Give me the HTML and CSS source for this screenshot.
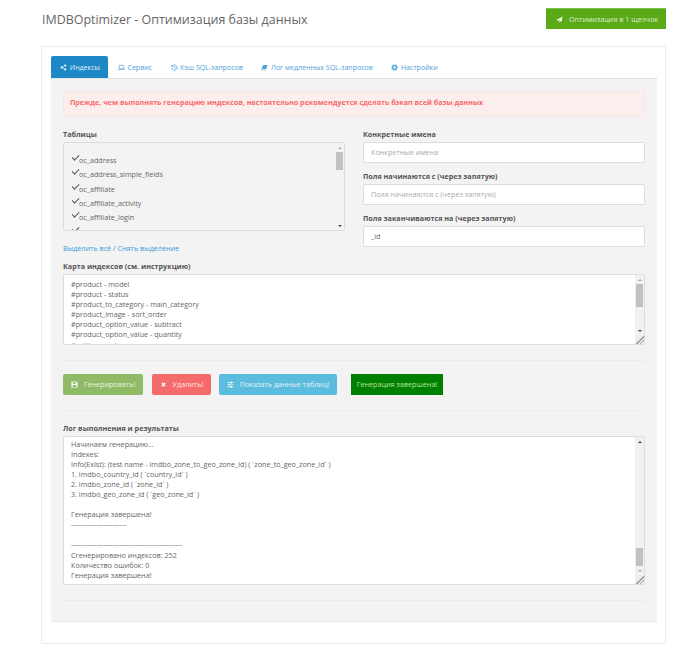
FILE: index.html
```html
<!DOCTYPE html>
<html lang="ru">
<head>
<meta charset="utf-8">
<title>IMDBOptimizer</title>
<link rel="stylesheet" href="styles.css">
</head>
<body>
<div class="page">
  <header class="head">
    <h1>IMDBOptimizer - Оптимизация базы данных</h1>
    <a class="oneclick"><svg class="ic" viewBox="0 0 16 16"><path d="M15 1 1 9l4 1.6L13 4l-6 7.4V15l2.4-3 3 1.2z" fill="currentColor"/></svg><span>Оптимизация в 1 щелчок</span></a>
  </header>
  <main class="panel">
    <nav class="tabs">
      <a class="tab active"><svg class="ic" viewBox="0 0 16 16"><path d="M12 3 4 8l8 5" fill="none" stroke="currentColor" stroke-width="1.6"/><circle cx="12" cy="3.5" r="2.6" fill="currentColor"/><circle cx="4" cy="8" r="2.6" fill="currentColor"/><circle cx="12" cy="12.5" r="2.6" fill="currentColor"/></svg>Индексы</a>
      <a class="tab"><svg class="ic" viewBox="0 0 16 16"><rect x="3" y="3" width="10" height="8" rx="1" fill="none" stroke="currentColor" stroke-width="1.6"/><path d="M0 12h16v1.500H0z" fill="currentColor"/></svg>Сервис</a>
      <a class="tab"><svg class="ic" viewBox="0 0 16 16"><path d="M3 5a6 6 0 1 1-.8 4.500" fill="none" stroke="currentColor" stroke-width="1.900"/><path d="M1 2v5h5z" fill="currentColor"/><path d="M8 5v4l3 1.500" fill="none" stroke="currentColor" stroke-width="1.500"/></svg>Кэш SQL-запросов</a>
      <a class="tab"><svg class="ic" viewBox="0 0 16 16"><path d="M5 2h10l-3 10H2L1 14h10l1 1H1.500C.5 15 0 14 .5 12.500z" fill="currentColor"/></svg>Лог медленных SQL-запросов</a>
      <a class="tab"><svg class="ic" viewBox="0 0 16 16"><circle cx="8" cy="8" r="4.700" fill="none" stroke="currentColor" stroke-width="3.400"/><circle cx="8" cy="8" r="7.500" fill="none" stroke="currentColor" stroke-width="1.200" stroke-dasharray="2.500 3.400"/></svg>Настройки</a>
    </nav>
    <section class="content">
      <div class="alert">Прежде, чем выполнять генерацию индексов, настоятельно рекомендуется сделать бэкап всей базы данных</div>

      <div class="cols">
        <div class="col">
          <label class="lbl">Таблицы</label>
          <div class="box tables">
            <ul class="list">
              <li><span class="chk"></span>oc_address</li>
              <li><span class="chk"></span>oc_address_simple_fields</li>
              <li><span class="chk"></span>oc_affiliate</li>
              <li><span class="chk"></span>oc_affiliate_activity</li>
              <li><span class="chk"></span>oc_affiliate_login</li>
              <li><span class="chk"></span>oc_affiliate_transaction</li>
            </ul>
            <div class="sb sb-plain">
              <span class="arrow up"></span>
              <span class="track"><span class="thumb t-tables"></span></span>
              <span class="arrow down"></span>
            </div>
          </div>
          <p class="links"><a>Выделить всё</a> / <a>Снять выделение</a></p>
        </div>
        <div class="col">
          <label class="lbl">Конкретные имена</label>
          <div class="input ph">Конкретные имена</div>
          <label class="lbl">Поля начинаются с (через запятую)</label>
          <div class="input ph">Поля начинаются с (через запятую)</div>
          <label class="lbl">Поля заканчиваются на (через запятую)</label>
          <div class="input">_id</div>
        </div>
      </div>

      <label class="lbl">Карта индексов (см. инструкцию)</label>
      <div class="box area map">
        <div class="txt">#product - model<br>#product - status<br>#product_to_category - main_category<br>#product_image - sort_order<br>#product_option_value - subtract<br>#product_option_value - quantity<br>#setting - code</div>
        <div class="sb">
          <span class="arrow up"></span>
          <span class="track"><span class="thumb t-map"></span></span>
          <span class="arrow down"></span>
          <span class="grip"></span>
        </div>
      </div>

      <hr class="rule r1">
      <div class="actions">
        <a class="btn green"><svg class="ic" viewBox="0 0 16 16"><path fill-rule="evenodd" d="M2 1h10l3 3v11H1V1zm2 1.500V6h7V2.500zM4 9v4.500h8V9z" fill="currentColor"/></svg>Генерировать!</a>
        <a class="btn red"><svg class="ic" viewBox="0 0 16 16"><path d="m3 5 2-2 3 3 3-3 2 2-3 3 3 3-2 2-3-3-3 3-2-2 3-3z" fill="currentColor"/></svg>Удалить!</a>
        <a class="btn blue"><svg class="ic" viewBox="0 0 16 16"><path d="M1 3h8V1h2v2h4v1.400h-4v2H9v-2H1zm0 5h3V6h2v2h9v1.400H6v2H4v-2H1zm0 4.600h8v-2h2v2h4V14h-4v2H9v-2H1z" fill="currentColor"/></svg>Показать данные таблиц!</a>
        <a class="btn done">Генерация завершена!</a>
      </div>
      <hr class="rule r2">

      <label class="lbl">Лог выполнения и результаты</label>
      <div class="box area log">
        <div class="txt">Начинаем генерацию...<br>Indexes:<br>Info(Exist): (test name - imdbo_zone_to_geo_zone_id) ( `zone_to_geo_zone_id` )<br>1. imdbo_country_id ( `country_id` )<br>2. imdbo_zone_id ( `zone_id` )<br>3. imdbo_geo_zone_id ( `geo_zone_id` )<br><br>Генерация завершена!<br>------------------------<br><br>------------------------------------------------<br>Сгенерировано индексов: 252<br>Количество ошибок: 0<br>Генерация завершена!</div>
        <div class="sb">
          <span class="arrow up dark"></span>
          <span class="track end"><span class="thumb t-log"></span></span>
          <span class="arrow down light"></span>
          <span class="grip"></span>
        </div>
      </div>
      <hr class="rule r3">
    </section>
  </main>
</div>
</body>
</html>
```
FILE: styles.css
```css
* { box-sizing: border-box; }
html, body { margin: 0; background: #fff; }
body { font-family: "Open Sans", "Noto Sans", sans-serif; font-size: 7.2px; line-height: 10.1px; color: #666; }
.page { width: 700px; height: 650px; padding: 8px 34px 0 41px; overflow: hidden; }
a { color: #3a9ad9; text-decoration: none; white-space: nowrap; }

.head { display: flex; justify-content: space-between; align-items: flex-start; height: 38px; }
.head h1 { margin: 2px 0 0 1px; font-size: 12.45px; line-height: 20px; font-weight: 400; color: #666; }
.oneclick { display: flex; align-items: center; width: 120px; height: 21px; padding-left: 10px; background: #5aa916; border-top: 1px solid #7fbe4f; color: #dfeecf; }
.oneclick .ic { width: 7px; height: 7px; margin-right: 6px; color: #fff; }
.ic { width: 7px; height: 7px; margin-right: 2px; flex: none; }

.panel { height: 598px; border: 1px solid #ececec; padding: 9px 8px 0 9px; background: #fff; }

.tabs { display: flex; height: 22px; font-size: 7.03px; }
.tab { display: flex; align-items: center; padding: 0 9.3px; color: #4ea3dc; }
.tab .ic { margin-right: 2.5px; }
.tab.active { width: 57px; background: #1e88c7; color: #e4f1f9; border-radius: 2px 2px 0 0; margin-right: 0.7px; }

.content { height: 544px; padding: 12px 12px 0; background: #f3f3f3; border-top: 1px solid #e4e4e4; border-bottom: 1px solid #e9e9e9; border-radius: 0 0 2px 2px; }

.alert { height: 25px; padding: 0 0 0 6px; line-height: 20px; font-size: 7.15px; background: #fdeeee; border: 1px solid #f8e6e6; border-radius: 2px; font-weight: 700; color: #f56b6b; }

.lbl { display: block; font-weight: 700; color: #555; height: 10px; }

.cols { display: grid; grid-template-columns: 282px 282px; column-gap: 18px; margin: 13px 0 8px; }
.col .lbl { margin-bottom: 3px; }

.box { display: flex; background: #fff; border: 1px solid #ddd; border-radius: 2px; overflow: hidden; }
.tables { height: 89px; background: #f3f3f3; }
.list { flex: 1; list-style: none; margin: 0; padding: 10px 0 0 6px; overflow: hidden; }
.list li { display: flex; align-items: center; height: 14.3px; color: #666; }
.chk { position: relative; width: 8px; height: 8px; margin-right: 1px; margin-top: -3px; }
.chk::after { content: ""; position: absolute; left: 1.5px; top: 0.5px; width: 5.5px; height: 2.5px; border-left: 1.3px solid #555; border-bottom: 1.3px solid #555; transform: rotate(-45deg); }

.sb { display: flex; flex-direction: column; align-items: center; width: 9px; flex: none; background: #f1f1f1; }
.sb-plain { background: #f3f3f3; }
.arrow { flex: none; width: 9px; height: 9px; display: flex; align-items: center; justify-content: center; }
.arrow::before { content: ""; border-left: 2.5px solid transparent; border-right: 2.5px solid transparent; }
.arrow.up::before { border-bottom: 2.5px solid #aaa; }
.arrow.down::before { border-top: 2.5px solid #444; }
.arrow.up.dark::before { border-bottom-color: #444; }
.arrow.down.light::before { border-top-color: #aaa; }
.track { flex: 1; width: 100%; display: flex; justify-content: center; align-items: flex-start; }
.track.end { align-items: flex-end; }
.thumb { display: block; width: 7px; background: #c1c1c1; }
.t-tables { height: 18px; }
.t-map { height: 23px; }
.t-log { height: 18px; }
.grip { flex: none; width: 9px; height: 9px; background: linear-gradient(135deg, #ececec 55%, #999 55%, #999 63%, #ececec 63%, #ececec 75%, #999 75%, #999 83%, #ececec 83%); }

.links { margin: 12px 0 0; height: 10px; color: #777; }
.links a { color: #3a9ad9; }

.input { height: 21px; margin-bottom: 8px; padding: 0 7px; line-height: 19px; background: #fff; border: 1px solid #ddd; border-radius: 2px; color: #666; }
.input.ph { color: #aaa; }
.col .input:last-child { margin-bottom: 0; }

.area { display: flex; width: 582px; }
.txt { flex: 1; padding: 4px 7px 0; overflow: hidden; color: #666; }
.log .txt { padding-top: 1.5px; }
.map { height: 71px; margin-top: 3px; }
.log { height: 149px; margin-top: 3px; }

.rule { margin: 0; border: 0; border-top: 1px solid #ebebeb; width: 582px; }
.r1 { margin-top: 15px; }
.r2 { margin-top: 15px; }
.r3 { margin-top: 15px; }

.actions { display: flex; height: 21px; margin-top: 13px; }
.btn { display: flex; align-items: center; justify-content: center; height: 21px; border-radius: 2px; color: #e9f3e2; }
.btn .ic { margin-right: 6px; color: #fff; }
.green { width: 80px; background: #8fbb66; }
.red { width: 59px; margin-left: 9px; background: #f56b6b; color: #fde5e5; }
.blue { width: 118px; margin-left: 8px; background: #5bbcdd; color: #e2f4fa; }
.done { width: 92px; margin-left: 14px; background: #008000; border-radius: 0; color: #b5e29a; }
.r2 + .lbl { margin-top: 12px; }
```
